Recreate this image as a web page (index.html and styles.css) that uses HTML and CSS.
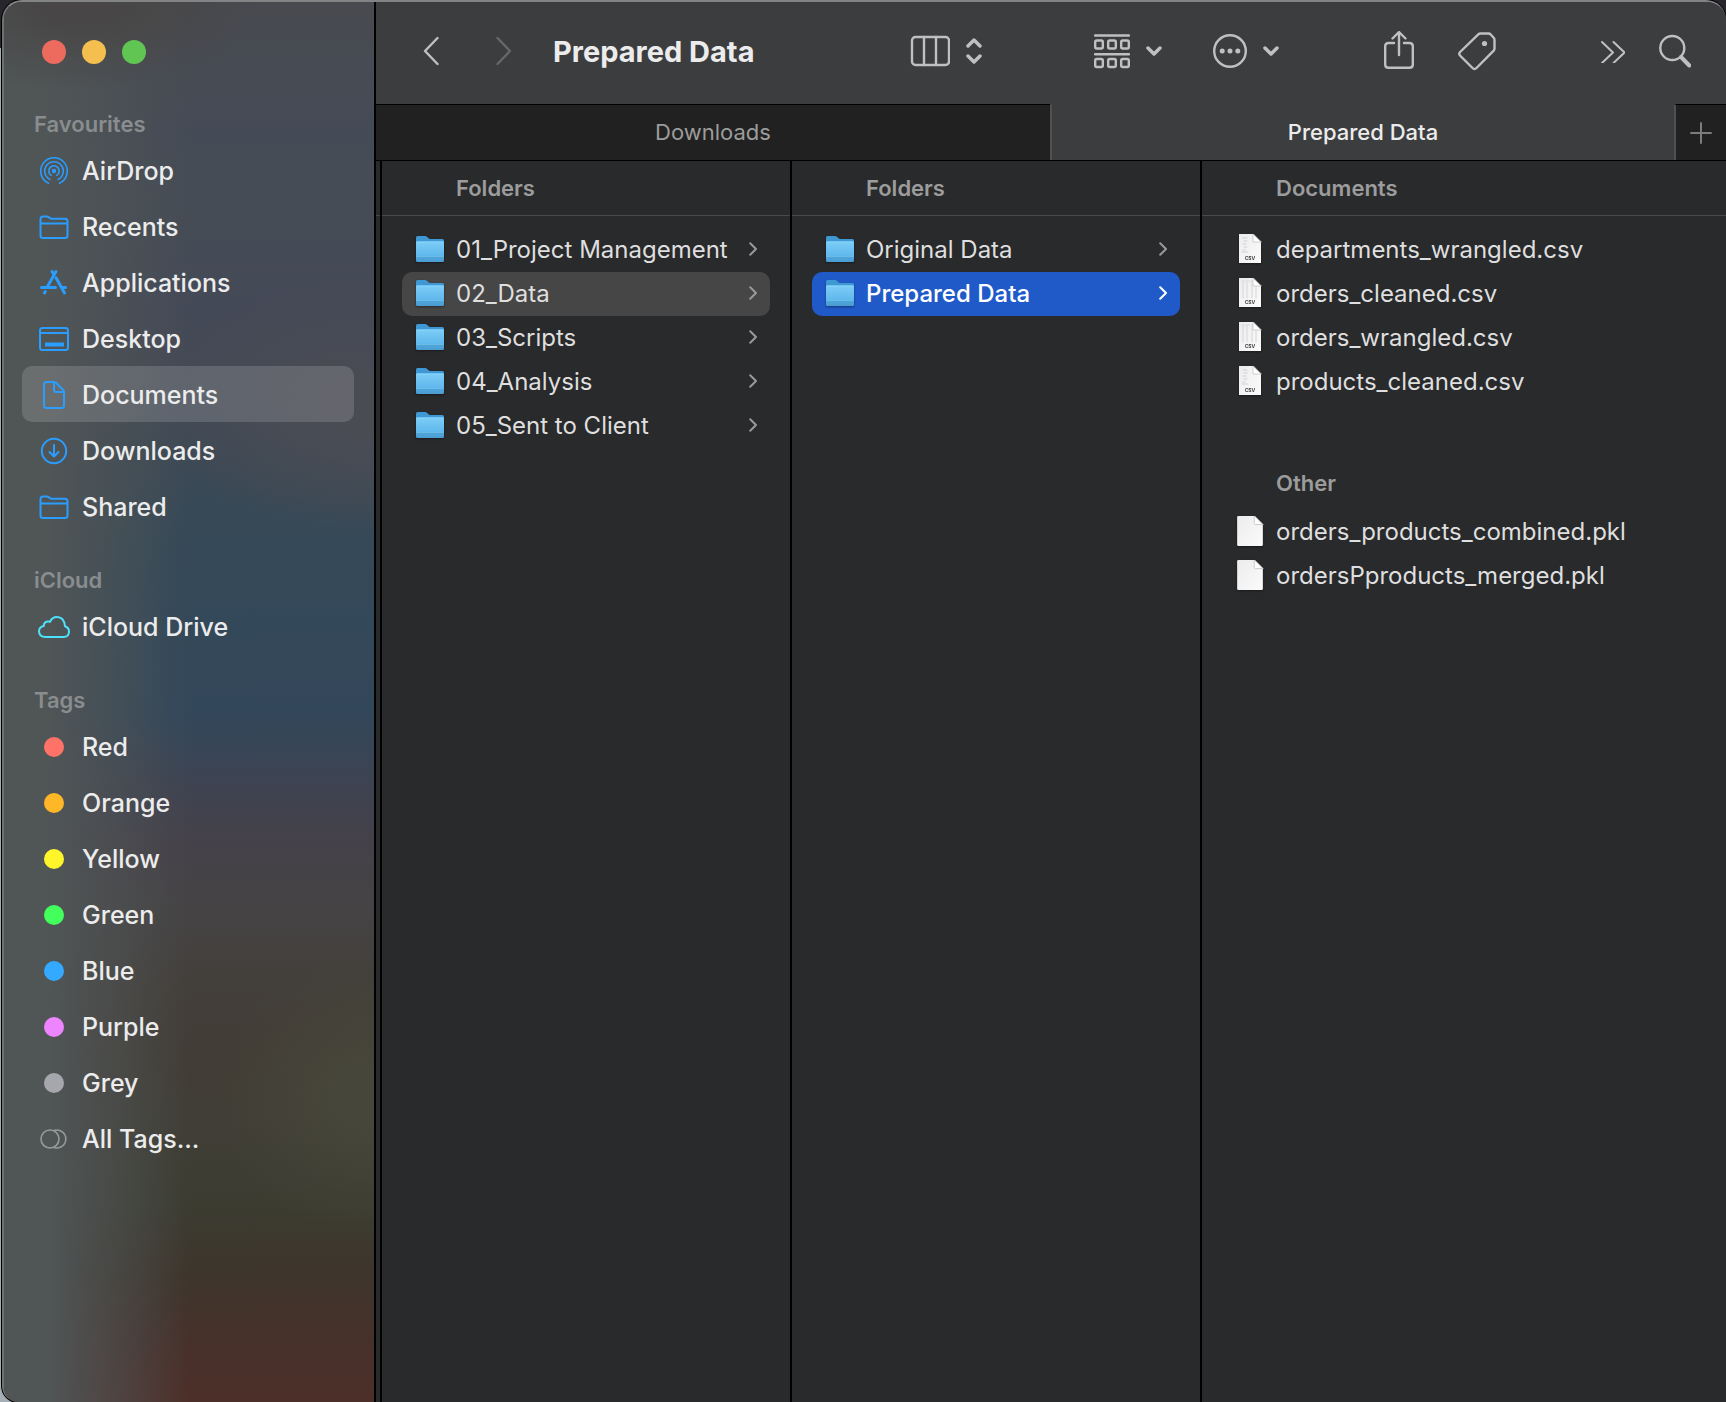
FILE: index.html
```
<!DOCTYPE html>
<html lang="en-GB">
<head>
<meta charset="utf-8">
<meta name="viewport" content="width=device-width, initial-scale=1">
<title>Prepared Data</title>
<link rel="stylesheet" href="styles.css">
</head>
<body>
<svg class="defs" aria-hidden="true">
  <defs>
    <linearGradient id="folder-front" x1="0" y1="0" x2="0" y2="1">
      <stop offset="0" stop-color="#7dcdf7"/>
      <stop offset="0.72" stop-color="#5fb7ec"/>
      <stop offset="0.76" stop-color="#4fa5da"/>
      <stop offset="1" stop-color="#4b9dd2"/>
    </linearGradient>
    <linearGradient id="paper" x1="0" y1="0" x2="1" y2="1">
      <stop offset="0" stop-color="#ececec"/>
      <stop offset="1" stop-color="#fbfbfb"/>
    </linearGradient>
    <symbol id="folder" viewBox="0 0 28 26">
      <path d="M0 1.500Q0 0 1.500 0H9q1.200 0 2.200 1l1.300 1.200q.8.800 2 .8H26.500Q28 3 28 4.500V10H0z" fill="#3f97d3"/>
      <path d="M0 6.500Q0 5.500 1 5.500H27q1 0 1 1V24.500Q28 26 26.500 26H1.500Q0 26 0 24.500z" fill="url(#folder-front)"/>
      <path d="M0 20.500H28" stroke="#6bbbe9" stroke-width="1"/>
      <path d="M1 6H27" stroke="#86d6fb" stroke-width="1"/>
    </symbol>
    <symbol id="file" viewBox="0 0 24 28">
      <path d="M1.200 0H16l8 8V26.800Q24 28 22.800 28H1.200Q0 28 0 26.800V1.200Q0 0 1.200 0z" fill="url(#paper)"/>
      <path d="M16 0v7q0 1 1 1h7z" fill="#fff" stroke="#c4c4c4" stroke-width=".8"/>
    </symbol>
    <symbol id="csv" viewBox="0 0 24 30">
      <path d="M1 0H15l8 8V29H1z" fill="url(#paper)"/>
      <path d="M5 4h4M6 7h3M5 10h3M6 13h3M5 16h2M4 18h6" stroke="#d0d0d0" stroke-width="1"/>
      <path d="M15 0v8h8z" fill="#fff" stroke="#c4c4c4" stroke-width=".8"/>
      <text x="12" y="26" text-anchor="middle" class="kind">CSV</text>
    </symbol>
    <symbol id="csv-grid" viewBox="0 0 24 30">
      <path d="M1 0H15l8 8V29H1z" fill="url(#paper)"/>
      <path d="M5 3V20M9 3V20M14 3V20M18 9V20" stroke="#d6d6d6" stroke-width="1"/>
      <path d="M4 3H14" stroke="#dedede" stroke-width="1"/>
      <path d="M15 0v8h8z" fill="#fff" stroke="#c4c4c4" stroke-width=".8"/>
      <text x="12" y="26" text-anchor="middle" class="kind">CSV</text>
    </symbol>
    <symbol id="side-folder" viewBox="0 0 32 32">
      <path d="M2.500 21V8q0-2.500 2.500-2.500h3.600q1.300 0 2.300.8l1 .8q.8.600 1.800.6H27q2.500 0 2.500 2.500V24.500Q29.500 27 27 27H5q-2.500 0-2.500-2.500zM2.500 12.500h27"/>
    </symbol>
    <symbol id="next" viewBox="0 0 8 14"><path d="M1.200 1.200 7 7l-5.800 5.800"/></symbol>
    <symbol id="down" viewBox="0 0 16 10"><path d="M2 2l6 6 6-6"/></symbol>
  </defs>
</svg>

<div class="window">
  <nav class="sidebar" aria-label="Sidebar">
    <div class="lights">
      <button class="light close" aria-label="Close"></button>
      <button class="light minimise" aria-label="Minimise"></button>
      <button class="light zoom" aria-label="Zoom"></button>
    </div>

    <section>
      <h2>Favourites</h2>
      <a class="place" href="#airdrop"><svg viewBox="0 0 32 32" class="fine"><circle cx="16" cy="16" r="2.200" fill="currentColor" stroke="none"/><path d="M13.200 20.400a5.200 5.200 0 1 1 5.600 0M12 24.400a9.300 9.300 0 1 1 8 0M10.500 28.200a13.300 13.300 0 1 1 11 0"/></svg>AirDrop</a>
      <a class="place" href="#recents"><svg><use href="#side-folder"/></svg>Recents</a>
      <a class="place" href="#applications"><svg viewBox="0 0 32 32" class="bold"><path d="M14 4.500l2 3.300M18 4.500 9.800 19M3.500 20.500H17.500M23.500 20.500H27.500M18 10.800 26.500 26M7.300 24.500l-.8 1.400"/></svg>Applications</a>
      <a class="place" href="#desktop"><svg viewBox="0 0 32 32"><rect x="2" y="5" width="28" height="22" rx="2.500"/><path d="M2 10H30"/><rect x="7" y="19.500" width="19" height="4" rx=".6" fill="currentColor" stroke="none"/></svg>Desktop</a>
      <a class="place current" href="#documents" aria-current="page"><svg viewBox="0 0 32 32"><path d="M8.500 3h7.700q1 0 1.800.8l7.200 7.200q.8.800.8 1.800V26.500Q26 29 23.500 29h-15Q6 29 6 26.500v-21Q6 3 8.500 3zM16 3.500v7.500q0 2 2 2h7.500"/></svg>Documents</a>
      <a class="place" href="#downloads"><svg viewBox="0 0 32 32"><circle cx="16" cy="16" r="12.200"/><path d="M16 10v11M11.500 17l4.500 4.500 4.500-4.500"/></svg>Downloads</a>
      <a class="place" href="#shared"><svg><use href="#side-folder"/></svg>Shared</a>
    </section>

    <section>
      <h2>iCloud</h2>
      <a class="place cloud" href="#icloud"><svg viewBox="0 0 32 32"><path d="M7.500 26Q1 26 1 20.300q0-4.300 4.800-5.300 0-4.500 4.400-4.500 1 0 1.800.4 2-4.900 7-4.900 7 0 8 9.200 4 1.300 4 5.300 0 5.500-5.500 5.500z"/></svg>iCloud Drive</a>
    </section>

    <section>
      <h2>Tags</h2>
      <a class="place" href="#red"><i class="dot red"></i>Red</a>
      <a class="place" href="#orange"><i class="dot orange"></i>Orange</a>
      <a class="place" href="#yellow"><i class="dot yellow"></i>Yellow</a>
      <a class="place" href="#green"><i class="dot green"></i>Green</a>
      <a class="place" href="#blue"><i class="dot blue"></i>Blue</a>
      <a class="place" href="#purple"><i class="dot purple"></i>Purple</a>
      <a class="place" href="#grey"><i class="dot grey"></i>Grey</a>
      <a class="place all" href="#all"><svg viewBox="0 0 32 32" class="fine"><circle cx="12" cy="16" r="9"/><path d="M16.500 7.300a9 9 0 1 1 0 17.400"/></svg>All Tags...</a>
    </section>
  </nav>

  <main>
    <header class="toolbar">
      <button aria-label="Back"><svg class="w16" viewBox="0 0 16 30"><path d="M14.500 2 2 15l12.500 13"/></svg></button>
      <button class="forward" aria-label="Forward" disabled><svg class="w16" viewBox="0 0 16 30"><path d="M1.500 2 14 15 1.500 28"/></svg></button>
      <h1>Prepared Data</h1>
      <button class="view" aria-label="View as columns">
        <svg class="w40" viewBox="0 0 40 32"><rect x="2" y="2" width="37" height="28" rx="3.500"/><path d="M14 2v28M26 2v28"/></svg>
        <svg class="w16 thick" viewBox="0 0 16 28"><path d="M2 9l6-6 6 6M2 19l6 6 6-6"/></svg>
      </button>
      <button class="group" aria-label="Group items">
        <svg class="w36" viewBox="0 0 36 36"><path d="M1 2.500h34M1 21.200h34"/><rect x="1.200" y="7.500" width="7.600" height="8" rx="1.500"/><rect x="14.200" y="7.500" width="7.600" height="8" rx="1.500"/><rect x="27.200" y="7.500" width="7.600" height="8" rx="1.500"/><rect x="1.200" y="26" width="7.600" height="8" rx="1.500"/><rect x="14.200" y="26" width="7.600" height="8" rx="1.500"/><rect x="27.200" y="26" width="7.600" height="8" rx="1.500"/></svg>
        <svg class="w16 thick"><use href="#down"/></svg>
      </button>
      <button class="action" aria-label="Actions">
        <svg class="w34" viewBox="0 0 34 34"><circle cx="17" cy="17" r="15.800"/><g fill="currentColor" stroke="none"><circle cx="9.200" cy="17" r="2.500"/><circle cx="17" cy="17" r="2.500"/><circle cx="24.800" cy="17" r="2.500"/></g></svg>
        <svg class="w16 thick"><use href="#down"/></svg>
      </button>
      <button class="share" aria-label="Share"><svg class="w30" viewBox="0 0 30 40"><path d="M10 12H4.500Q1.200 12 1.200 15.300V33.500q0 3.300 3.300 3.300H25.500q3.300 0 3.300-3.300V15.300Q28.800 12 25.500 12H20M15 24V2M8.500 7.500 15 1l6.500 6.500"/></svg></button>
      <button class="tag" aria-label="Edit tags"><svg class="w38" viewBox="0 0 38 40"><path d="M22.500 2.500h8q1.300 0 2.200 1l3 3.300q.8.900.8 2.100v8.600q0 1.200-.8 2.100L18.500 37q-2 2-4 0L2 24.500q-1.500-1.700.1-3.500L20.300 3.400q.9-.9 2.200-.9z"/><circle cx="26.500" cy="12.500" r="2.600" fill="currentColor" stroke="none"/></svg></button>
      <button class="more" aria-label="More toolbar items"><svg class="w24 fine" viewBox="0 0 24 24"><path d="M1 3l11 10.500L1 24M12.500 3l11 10.500-11 10.500"/></svg></button>
      <button class="search" aria-label="Search"><svg class="w32" viewBox="0 0 32 34"><circle cx="13.300" cy="14" r="12"/><path d="M22 23l8.300 8.500" stroke-width="4"/></svg></button>
    </header>

    <div class="tabs">
      <button class="tab">Downloads</button>
      <button class="tab active" aria-current="page">Prepared Data</button>
      <button class="add" aria-label="New tab"><svg viewBox="0 0 22 22"><path d="M11 1v20M1 11h20"/></svg></button>
    </div>

    <div class="browser">
      <div class="gutter"></div>
      <section class="column">
        <h2>Folders</h2>
        <div class="rows">
          <a class="row" href="#01"><svg class="icon"><use href="#folder"/></svg><span>01_Project Management</span><svg class="next"><use href="#next"/></svg></a>
          <a class="row open" href="#02"><svg class="icon"><use href="#folder"/></svg><span>02_Data</span><svg class="next"><use href="#next"/></svg></a>
          <a class="row" href="#03"><svg class="icon"><use href="#folder"/></svg><span>03_Scripts</span><svg class="next"><use href="#next"/></svg></a>
          <a class="row" href="#04"><svg class="icon"><use href="#folder"/></svg><span>04_Analysis</span><svg class="next"><use href="#next"/></svg></a>
          <a class="row" href="#05"><svg class="icon"><use href="#folder"/></svg><span>05_Sent to Client</span><svg class="next"><use href="#next"/></svg></a>
        </div>
      </section>
      <section class="column">
        <h2>Folders</h2>
        <div class="rows">
          <a class="row" href="#original"><svg class="icon"><use href="#folder"/></svg><span>Original Data</span><svg class="next"><use href="#next"/></svg></a>
          <a class="row selected" href="#prepared"><svg class="icon"><use href="#folder"/></svg><span>Prepared Data</span><svg class="next"><use href="#next"/></svg></a>
        </div>
      </section>
      <section class="column files">
        <h2>Documents</h2>
        <div class="rows">
          <a class="row" href="#departments"><svg class="icon"><use href="#csv"/></svg><span>departments_wrangled.csv</span></a>
          <a class="row" href="#orders-cleaned"><svg class="icon"><use href="#csv-grid"/></svg><span>orders_cleaned.csv</span></a>
          <a class="row" href="#orders-wrangled"><svg class="icon"><use href="#csv-grid"/></svg><span>orders_wrangled.csv</span></a>
          <a class="row" href="#products"><svg class="icon"><use href="#csv"/></svg><span>products_cleaned.csv</span></a>
          <h3>Other</h3>
          <a class="row" href="#combined"><svg class="icon"><use href="#file"/></svg><span>orders_products_combined.pkl</span></a>
          <a class="row" href="#merged"><svg class="icon"><use href="#file"/></svg><span>ordersPproducts_merged.pkl</span></a>
        </div>
      </section>
    </div>
  </main>
</div>
</body>
</html>
```
FILE: styles.css
```
*, *::before, *::after { box-sizing: border-box; }

body {
  margin: 0;
  background: linear-gradient(#26262b 48px, #a4aeb4 48px);
  font-family: Inter, "Liberation Sans", sans-serif;
  font-size: 24px;
  color: #dfdfdf;
}

h1, h2, h3 { margin: 0; }
a { color: inherit; text-decoration: none; }

button {
  display: flex;
  align-items: center;
  padding: 0;
  border: 0;
  background: none;
  color: inherit;
  font: inherit;
}

svg {
  flex: none;
  fill: none;
  stroke: currentColor;
  stroke-width: 2;
  stroke-linecap: round;
  stroke-linejoin: round;
}

.defs { position: absolute; width: 0; height: 0; }

.kind {
  font-size: 5px;
  font-weight: 700;
  fill: #444;
  stroke: none;
}

.window {
  display: flex;
  min-height: 100vh;
  margin-left: 2px;
  overflow: hidden;
  border-top: 2px solid #818385;
  border-left: 2px solid #6c7173;
  border-radius: 20px 20px 0 16px;
  box-shadow: 0 0 0 1px #000;
  background: #292a2c;
}

/* Sidebar */

.sidebar {
  flex: none;
  width: 372px;
  padding: 38px 20px 0 18px;
  border-right: 2px solid #000;
  color: #ececec;
  background:
    radial-gradient(180px 90px at 20% 0%, #484646 20%, rgba(72, 70, 70, 0) 100%),
    linear-gradient(90deg, #505556 12%, rgba(80, 85, 86, 0.5) 32%, rgba(80, 85, 86, 0) 50%),
    radial-gradient(220px 130px at 100% 29%, #4a4c54 20%, rgba(74, 76, 84, 0) 100%),
    radial-gradient(160px 140px at 100% 78%, #47463a 20%, rgba(71, 70, 58, 0) 100%),
    linear-gradient(#484a4f 0%, #454b56 9%, #454c55 15%, #444957 22%, #444955 27%,
      #3d4955 32%, #364957 38%, #334859 44%, #33475a 51%, #3e4351 56%, #454149 60%,
      #454344 65%, #433f3b 70%, #423d36 75%, #403e36 80%, #3c3c31 86%, #3e352c 91%,
      #49302a 97%, #4d2f29 100%);
}

.lights {
  display: flex;
  gap: 16px;
  padding: 0 20px;
}

.light { width: 24px; height: 24px; border-radius: 50%; }
.close { background: #ed6a5e; }
.minimise { background: #f5bf4f; }
.zoom { background: #61c554; }

.sidebar section { margin-top: 28px; }
.lights + section { margin-top: 42px; }

.sidebar h2 {
  padding-left: 12px;
  color: #898d8f;
  font-size: 22px;
  font-weight: 600;
  line-height: 36px;
}

.place {
  display: flex;
  align-items: center;
  gap: 12px;
  height: 56px;
  padding: 2px 16px 0;
  border-radius: 10px;
  font-size: 25px;
  font-weight: 500;
}

.place svg { width: 32px; height: 32px; color: #2a9dff; }
.place .fine { stroke-width: 1.600; }
.place .bold { stroke-width: 3; }
.place.current { background: rgba(255, 255, 255, 0.15); }
.place.cloud svg { color: #4ce2fb; }
.place.all svg { color: #989a9a; }

.dot { width: 20px; height: 20px; margin: 0 6px; border-radius: 50%; }
.red { background: #ff7268; }
.orange { background: #ffb627; }
.yellow { background: #fff52b; }
.green { background: #43ff5c; }
.blue { background: #33a9ff; }
.purple { background: #ec85ff; }
.grey { background: #a6a6ad; }

/* Toolbar */

main {
  display: flex;
  flex: 1;
  flex-direction: column;
  min-width: 0;
}

.toolbar {
  display: flex;
  align-items: center;
  height: 102px;
  padding: 0 35px 4px 47px;
  background: #3c3d3f;
  color: #c0c0c1;
}

.toolbar svg { height: 40px; stroke-width: 2.400; }
.toolbar .thick { stroke-width: 3.500; }
.toolbar .fine { height: 24px; stroke-width: 2; }
.w16 { width: 16px; }
.w24 { width: 24px; }
.w30 { width: 30px; }
.w32 { width: 32px; }
.w34 { width: 34px; }
.w36 { width: 36px; }
.w38 { width: 38px; }
.w40 { width: 40px; }

.forward { margin-left: 57px; color: #66676a; }

h1 {
  flex: 1;
  margin-left: 41px;
  color: #ececec;
  font-size: 29px;
  font-weight: 700;
  white-space: nowrap;
}

.view, .group, .action { gap: 16px; }
.group { margin-left: 112px; }
.action { margin-left: 51px; }
.share { margin-left: 105px; }
.tag { margin-left: 44px; }
.more { margin-left: 105px; }
.search { margin-left: 34px; }

/* Tabs */

.tabs {
  display: grid;
  grid-template-columns: 27fr 25fr 52px;
  height: 57px;
  border-bottom: 1px solid #000;
  background: #3c3d3f;
}

.tab, .add {
  justify-content: center;
  border-top: 1px solid #000;
  background: #212121;
  color: #9c9c9c;
  font-size: 22px;
}

.tab { padding-bottom: 2px; }

.tab.active {
  border-top-color: transparent;
  border-left: 2px solid #505052;
  background: #3c3d3f;
  color: #ececec;
  font-weight: 500;
}

.add { border-left: 2px solid #505052; color: #7c7c7c; }
.add svg { width: 22px; height: 22px; }

/* Column browser */

.browser { display: flex; flex: 1; }

.gutter {
  flex: none;
  width: 6px;
  border-right: 2px solid #000;
}

.gutter::before {
  content: "";
  display: block;
  height: 55px;
  border-bottom: 1px solid #48494b;
}

.column {
  flex: none;
  width: 410px;
  border-right: 2px solid #000;
}

.column.files { flex: 1; min-width: 0; border-right: 0; }

.column h2, .column h3 {
  color: #9c9c9d;
  font-size: 22px;
  font-weight: 600;
  line-height: 54px;
}

.column h2 {
  padding-left: 74px;
  border-bottom: 1px solid #48494b;
}

.column h3 { margin-top: 52px; padding-left: 54px; }

.rows { padding: 12px 20px; }

.row {
  display: flex;
  align-items: center;
  gap: 12px;
  height: 44px;
  padding: 0 13px 2px 14px;
  border-radius: 10px;
  white-space: nowrap;
}

.row span { flex: 1; }
.row .icon { width: 28px; height: 30px; stroke: none; filter: drop-shadow(0 1px 1px rgba(0, 0, 0, 0.4)); }
.row .next { width: 8px; height: 14px; color: #98999a; }

.row.open { background: #464646; }
.row.selected { background: #205ac9; color: #fff; font-weight: 500; }
.row.selected .next { color: #fff; }
```
